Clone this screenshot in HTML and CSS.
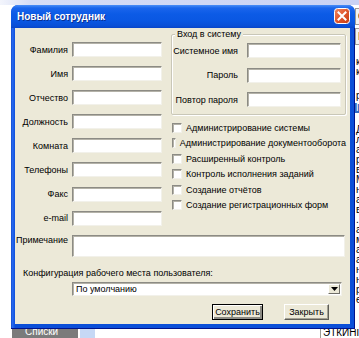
FILE: index.html
```html
<!DOCTYPE html>
<html lang="ru">
<head>
    <meta charset="UTF-8">
    <title>Новый сотрудник</title>
    <link rel="stylesheet" href="styles.css">
</head>
<body>
    <div class="screen">
        <div class="behind-top"></div>

        <div class="middle">
            <div class="gutter"></div>

            <div class="dialog">
                <div class="titlebar">
                    <span class="title">Новый сотрудник</span>
                    <span class="close">
                        <svg width="16" height="16" viewBox="0 0 16 16">
                            <defs>
                                <linearGradient id="red" x1="0" y1="0" x2="1" y2="1">
                                    <stop offset="0" stop-color="#f08a64"/>
                                    <stop offset="0.5" stop-color="#e0562c"/>
                                    <stop offset="1" stop-color="#c43c14"/>
                                </linearGradient>
                            </defs>
                            <rect x="0.5" y="0.5" width="15" height="15" rx="3" fill="url(#red)" stroke="#ffffff"/>
                            <path d="M4.5 4.5 L11.5 11.5 M11.5 4.5 L4.5 11.5" stroke="#ffffff" stroke-width="2" stroke-linecap="square"/>
                        </svg>
                    </span>
                </div>

                <div class="frame">
                    <div class="client">
                        <div class="upper">
                            <div class="fields">
                                <div class="row"><label>Фамилия</label><div class="edit"></div></div>
                                <div class="row"><label>Имя</label><div class="edit"></div></div>
                                <div class="row"><label>Отчество</label><div class="edit"></div></div>
                                <div class="row"><label>Должность</label><div class="edit"></div></div>
                                <div class="row"><label>Комната</label><div class="edit"></div></div>
                                <div class="row"><label>Телефоны</label><div class="edit"></div></div>
                                <div class="row"><label>Факс</label><div class="edit"></div></div>
                                <div class="row"><label>e-mail</label><div class="edit"></div></div>
                            </div>

                            <div class="side">
                                <div class="group">
                                    <span class="legend">Вход в систему</span>
                                    <div class="group-rows">
                                        <div class="grow"><label>Системное имя</label><div class="edit"></div></div>
                                        <div class="grow"><label>Пароль</label><div class="edit"></div></div>
                                        <div class="grow"><label>Повтор пароля</label><div class="edit"></div></div>
                                    </div>
                                </div>

                                <div class="rights">
                                    <div class="check"><span class="box"></span><span>Администрирование системы</span></div>
                                    <div class="check"><span class="box"></span><span>Администрирование документооборота</span></div>
                                    <div class="check"><span class="box"></span><span>Расширенный контроль</span></div>
                                    <div class="check"><span class="box"></span><span>Контроль исполнения заданий</span></div>
                                    <div class="check"><span class="box"></span><span>Создание отчётов</span></div>
                                    <div class="check"><span class="box"></span><span>Создание регистрационных форм</span></div>
                                </div>
                            </div>
                        </div>

                        <div class="note">
                            <label>Примечание</label>
                            <div class="edit memo"></div>
                        </div>

                        <div class="config-label">Конфигурация рабочего места пользователя:</div>
                        <div class="combo">
                            <span class="combo-text">По умолчанию</span>
                            <span class="combo-btn">
                                <svg width="7" height="4" viewBox="0 0 7 4"><path d="M0 0 H7 L3.5 4 Z" fill="#000"/></svg>
                            </span>
                        </div>

                        <div class="buttons">
                            <div class="btn default">Сохранить</div>
                            <div class="btn">Закрыть</div>
                        </div>
                    </div>
                </div>
            </div>

            <div class="behind-right">
                <div class="rs-box">С</div>
                <div class="rs-box">Н</div>
                <div class="rs-text">к<br>к</div>
                <div class="rs-text gap">р</div>
                <div class="rs-sel">П</div>
                <div class="rs-text">Д<br>л<br>а<br>р<br>в<br>М<br>н<br>а<br>в<br>.<br>а<br>м<br>а<br>а<br>н<br>н<br>р<br>е</div>
            </div>
        </div>

        <div class="behind-bottom">
            <div class="tab">Списки</div>
            <div class="tab-icon"></div>
            <div class="bb-space"></div>
            <div class="bb-text">ЭТКИНП.</div>
        </div>
    </div>
</body>
</html>
```

FILE: styles.css
```css
* {
    box-sizing: border-box;
}

body {
    margin: 0;
    background-color: #ffffff;
    font-family: "Liberation Sans", Arial, sans-serif;
    font-size: 9px;
    color: #000000;
}

.screen {
    width: 359px;
    height: 338px;
    overflow: hidden;
    display: flex;
    flex-direction: column;
}

.behind-top {
    height: 5px;
    flex-shrink: 0;
    background: linear-gradient(to right, #f3f5fc 0, #d6ddf6 30px, #c9d2f4 100%);
}

.middle {
    display: flex;
    height: 324px;
    flex-shrink: 0;
}

.gutter {
    width: 11px;
    flex-shrink: 0;
}

/* the window */

.dialog {
    width: 344px;
    flex-shrink: 0;
    display: flex;
    flex-direction: column;
    border-radius: 7px 7px 0 0;
    overflow: hidden;
    background-color: #0b4fd8;
}

.titlebar {
    height: 23px;
    display: flex;
    align-items: flex-start;
    justify-content: space-between;
    padding: 0 5px 0 6px;
    background: linear-gradient(to bottom, #4a8ef7 0, #1a65ec 3px, #0c5be6 9px, #0a57e2 16px, #0a4fd6 21px, #0945c8 23px);
}

.title {
    margin-top: 6px;
    font-size: 10px;
    font-weight: bold;
    color: #ffffff;
    text-shadow: 1px 1px #0a2f90;
}

.close {
    margin-top: 3px;
    width: 16px;
    height: 16px;
}

.close svg {
    display: block;
}

.frame {
    padding: 0 4px 4px 4px;
    background: linear-gradient(to right, #0a3fbf 0, #2a6cf0 1px, #1a5ae6 3px, #0b4fd8 4px);
    border-right: 1px solid #00138c;
    border-bottom: 1px solid #00138c;
}

.client {
    height: 296px;
    background-color: #ece9d8;
    display: flex;
    flex-direction: column;
}

/* edits */

.edit {
    height: 15px;
    background-color: #ffffff;
    border: 1px solid;
    border-color: #8c8b84 #f2f1ea #f2f1ea #8c8b84;
    box-shadow: inset 1px 1px #b4b2a8;
}

.upper {
    display: flex;
    align-items: flex-start;
}

.fields {
    width: 147px;
    padding-top: 14px;
    display: flex;
    flex-direction: column;
    gap: 9.1px;
}

.row {
    display: flex;
    align-items: center;
    height: 15px;
}

.row label {
    width: 53px;
    margin-right: 4px;
    text-align: right;
    white-space: nowrap;
}

.row .edit {
    width: 90px;
}

.side {
    width: 175px;
    margin-left: 9px;
}

.group {
    margin-top: 6px;
    height: 81px;
    border: 1px solid #c9c7b8;
    box-shadow: inset 1px 1px #ffffff, 1px 1px #ffffff;
    border-radius: 2px;
}

.legend {
    display: table;
    height: 10px;
    line-height: 10px;
    margin: -6px 0 0 3px;
    padding: 0 2px;
    background-color: #ece9d8;
}

.group-rows {
    margin-top: 4px;
    display: flex;
    flex-direction: column;
    gap: 9.5px;
}

.grow {
    display: flex;
    align-items: center;
    height: 15px;
}

.grow label {
    width: 66px;
    margin-right: 9px;
    text-align: right;
    white-space: nowrap;
}

.grow .edit {
    width: 94px;
}

.rights {
    margin-top: 8px;
    display: flex;
    flex-direction: column;
    gap: 5.4px;
}

.check {
    display: flex;
    align-items: center;
    height: 10px;
    white-space: nowrap;
}

.box {
    width: 10px;
    height: 10px;
    margin: 0 4px 0 1px;
    background-color: #ffffff;
    border: 1px solid;
    border-color: #8c8b84 #f2f1ea #f2f1ea #8c8b84;
    box-shadow: inset 1px 1px #b4b2a8;
}

.note {
    margin-top: 9px;
    display: flex;
    align-items: flex-start;
}

.note label {
    width: 53px;
    margin-right: 4px;
    text-align: right;
    line-height: 11px;
}

.memo {
    width: 273px;
    height: 22px;
}

.config-label {
    margin: 11px 0 0 8px;
    line-height: 11px;
    white-space: nowrap;
}

.combo {
    margin: 3px 0 0 57px;
    width: 270px;
    height: 14px;
    display: flex;
    align-items: center;
    justify-content: space-between;
    background-color: #ffffff;
    border: 1px solid;
    border-color: #8c8b84 #f2f1ea #f2f1ea #8c8b84;
    box-shadow: inset 1px 1px #b4b2a8;
    padding: 1px 1px 1px 3px;
}

.combo-btn {
    width: 12px;
    height: 10px;
    display: flex;
    align-items: center;
    justify-content: center;
    background-color: #ece9d8;
    border: 1px solid;
    border-color: #ffffff #6f6e68 #6f6e68 #ffffff;
}

.combo-btn svg {
    display: block;
}

.buttons {
    margin-top: 8px;
    padding-right: 21px;
    display: flex;
    justify-content: flex-end;
    gap: 21px;
}

.btn {
    width: 45px;
    height: 16px;
    display: flex;
    align-items: center;
    justify-content: center;
    background-color: #ece9d8;
    border: 1px solid;
    border-color: #ffffff #5f5e58 #5f5e58 #ffffff;
    box-shadow: inset -1px -1px #a3a194;
}

.btn.default {
    width: 51px;
    border: 1px solid #000000;
    box-shadow: inset 1px 1px #ffffff, inset -2px -2px #8c8b84;
}

/* what shows of the windows behind */

.behind-right {
    width: 4px;
    flex-shrink: 0;
    overflow: hidden;
    background-color: #ffffff;
    line-height: 10px;
    font-size: 10px;
    white-space: nowrap;
}

.rs-box {
    margin-top: 3px;
    height: 17px;
    padding: 3px 0 0 2px;
    border: 1px solid #9d9c96;
    border-right: none;
    background-color: #f4f4f4;
}

.rs-text {
    padding-left: 1px;
    margin-top: 12px;
}

.rs-text.gap {
    margin-top: 14px;
}

.rs-sel {
    margin-top: 2px;
    padding-left: 1px;
    background-color: #316ac5;
    color: #ffffff;
}

.behind-bottom {
    flex: 1;
    display: flex;
    align-items: stretch;
    background-color: #ffffff;
}

.tab {
    margin-left: 12px;
    width: 66px;
    padding: 0 0 0 13px;
    background-color: #7b7b7b;
    color: #ffffff;
    font-size: 10px;
    line-height: 6px;
    overflow: hidden;
}

.tab-icon {
    width: 15px;
    margin-left: 2px;
    background-color: #c6d8f5;
}

.bb-space {
    flex: 1;
}

.bb-text {
    width: 39px;
    padding-left: 2px;
    border-left: 1px solid #9d9c96;
    font-size: 10px;
    line-height: 8px;
    overflow: hidden;
}
```
